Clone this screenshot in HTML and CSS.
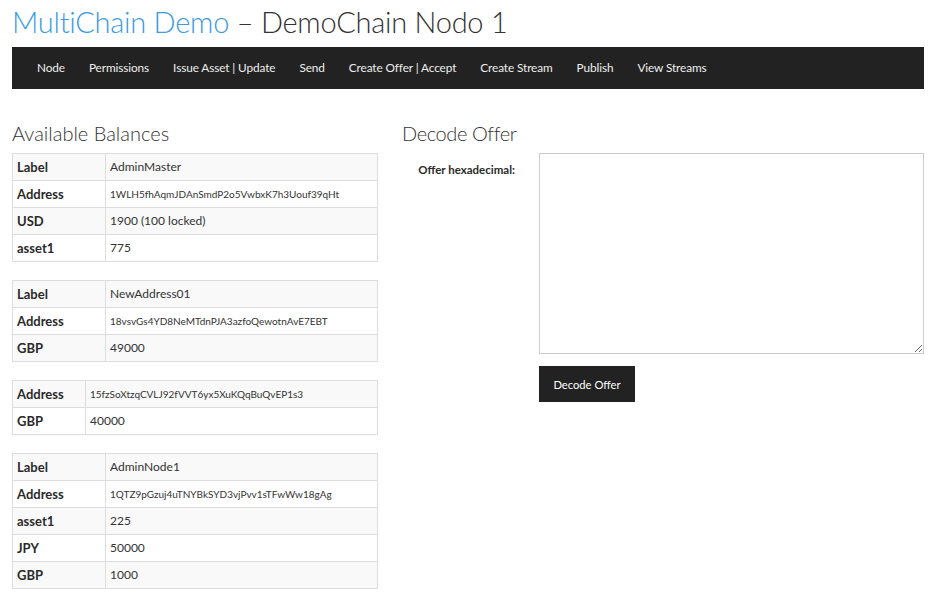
FILE: index.html
```html
<!DOCTYPE html>
<html lang="en">
<head>
<meta charset="utf-8">
<title>MultiChain Demo</title>
<link rel="stylesheet" href="styles.css">
</head>
<body>
<div class="page">
  <h1 class="title"><span class="brand">MultiChain Demo</span> – DemoChain Nodo 1</h1>
  <nav class="navbar">
    <a href="#">Node</a>
    <a href="#">Permissions</a>
    <a href="#">Issue Asset | Update</a>
    <a href="#">Send</a>
    <a href="#">Create Offer | Accept</a>
    <a href="#">Create Stream</a>
    <a href="#">Publish</a>
    <a href="#">View Streams</a>
  </nav>
  <div class="columns">
    <section class="left">
      <h3 class="heading">Available Balances</h3>
      <table class="balances">
        <tr><th>Label</th><td>AdminMaster</td></tr>
        <tr><th>Address</th><td class="addr">1WLH5fhAqmJDAnSmdP2o5VwbxK7h3Uouf39qHt</td></tr>
        <tr><th>USD</th><td>1900 (100 locked)</td></tr>
        <tr><th>asset1</th><td>775</td></tr>
      </table>
      <table class="balances">
        <tr><th>Label</th><td>NewAddress01</td></tr>
        <tr><th>Address</th><td class="addr">18vsvGs4YD8NeMTdnPJA3azfoQewotnAvE7EBT</td></tr>
        <tr><th>GBP</th><td>49000</td></tr>
      </table>
      <table class="balances narrow">
        <tr><th>Address</th><td class="addr">15fzSoXtzqCVLJ92fVVT6yx5XuKQqBuQvEP1s3</td></tr>
        <tr><th>GBP</th><td>40000</td></tr>
      </table>
      <table class="balances">
        <tr><th>Label</th><td>AdminNode1</td></tr>
        <tr><th>Address</th><td class="addr">1QTZ9pGzuj4uTNYBkSYD3vjPvv1sTFwWw18gAg</td></tr>
        <tr><th>asset1</th><td>225</td></tr>
        <tr><th>JPY</th><td>50000</td></tr>
        <tr><th>GBP</th><td>1000</td></tr>
      </table>
    </section>
    <section class="right">
      <h3 class="heading">Decode Offer</h3>
      <form class="form">
        <label class="form-label" for="hex">Offer hexadecimal:</label>
        <div class="form-field">
          <textarea id="hex" class="hex"></textarea>
          <button type="button" class="btn">Decode Offer</button>
        </div>
      </form>
    </section>
  </div>
</div>
</body>
</html>
```
FILE: styles.css
```css
* { box-sizing: border-box; }
body {
  margin: 0;
  font-family: "Lato", "Open Sans", sans-serif;
  font-size: 13px;
  color: #333;
  background: #fff;
}
.page {
  padding: 0 8px 0 12px;
  width: 932px;
}
.title {
  margin: 0;
  height: 47px;
  padding-top: 5px;
  font-size: 29px;
  font-weight: 300;
  line-height: 34px;
  color: #333;
  letter-spacing: -0.25px;
}
.brand { color: #3a9be4; }
.navbar {
  display: flex;
  align-items: center;
  width: 912px;
  height: 42px;
  background: #222;
  padding-left: 13px;
}
.navbar a {
  color: #eee;
  text-decoration: none;
  font-size: 11.8px;
  letter-spacing: -0.1px;
  padding: 0 12px;
  line-height: 42px;
}
.columns {
  display: grid;
  grid-template-columns: 366px 522px;
  column-gap: 24px;
  margin-top: 30px;
}
.heading {
  margin: 0 0 6px;
  font-size: 20px;
  font-weight: 300;
  line-height: 24px;
  height: 28px;
  padding-top: 2px;
  color: #333;
}
.right .heading { letter-spacing: -0.4px; }
.balances {
  width: 100%;
  border-collapse: collapse;
  margin-bottom: 18px;
  border: 1px solid #ddd;
}
.balances tr:nth-child(odd) { background: #f9f9f9; }
.balances th, .balances td {
  border: 1px solid #ddd;
  height: 27px;
  padding: 0 4px;
  text-align: left;
  vertical-align: middle;
  line-height: 16px;
}
.balances th {
  width: 93px;
  font-weight: 700;
  color: #2a2a2a;
}
.balances.narrow th { width: 73px; }
.balances td { font-size: 12px; }
.balances td.addr { font-size: 10px; }
.form {
  display: grid;
  grid-template-columns: 125px 385px;
  column-gap: 12px;
}
.form-label {
  text-align: right;
  padding-right: 12px;
  padding-top: 10px;
  font-weight: 700;
  font-size: 11.5px;
  color: #2a2a2a;
}
.form-field {
  display: flex;
  flex-direction: column;
  align-items: flex-start;
}
.hex {
  width: 385px;
  height: 201px;
  border: 1px solid #ccc;
  margin: 0;
  resize: both;
  font-family: inherit;
}
.btn {
  margin-top: 12px;
  width: 96px;
  height: 36px;
  background: #222;
  color: #fff;
  border: none;
  font-family: inherit;
  font-size: 11.2px;
  cursor: pointer;
}
```
